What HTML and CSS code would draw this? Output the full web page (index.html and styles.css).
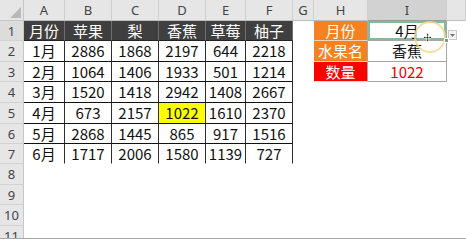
FILE: index.html
```html
<!DOCTYPE html>
<html lang="zh-CN">
<head>
<meta charset="utf-8">
<title>Sheet</title>
<link rel="stylesheet" href="styles.css">
</head>
<body>
<div class="wrap">
<table class="sheet">
<colgroup>
<col class="w24"><col class="w41"><col class="w47"><col class="w47"><col class="w47"><col class="w40"><col class="w47"><col class="w21"><col class="w54"><col class="w79"><col class="w19">
</colgroup>
<tr class="h21">
  <th class="corner"><svg class="tri" width="13" height="12" viewBox="0 0 13 12"><polygon points="12,0 12,11 1,11" fill="#b8b8b8"/></svg></th>
  <th class="ch">A</th><th class="ch">B</th><th class="ch">C</th><th class="ch">D</th><th class="ch">E</th><th class="ch">F</th><th class="ch">G</th><th class="ch">H</th><th class="ch sel">I</th><th class="ch"></th>
</tr>
<tr class="h20">
  <th class="rn rsel">1</th>
  <td class="dh">月份</td><td class="dh">苹果</td><td class="dh">梨</td><td class="dh">香蕉</td><td class="dh">草莓</td><td class="dh">柚子</td>
  <td></td><td class="lab org">月份</td>
  <td class="val cur">4月
    <svg class="ring" width="34" height="34" viewBox="0 0 34 34"><circle cx="17" cy="17" r="15" fill="none" stroke="#f2d98c" stroke-width="2" opacity="0.85"/></svg>
    <svg class="mv" width="9" height="9" viewBox="0 0 9 9"><path d="M4.5 0.5 L6 2.2 H5 V4 H6.8 V3 L8.5 4.5 L6.8 6 V5 H5 V6.8 H6 L4.5 8.5 L3 6.8 H4 V5 H2.2 V6 L0.5 4.5 L2.2 3 V4 H4 V2.2 H3 Z" fill="#111" stroke="#fff" stroke-width="0.6"/></svg>
    <span class="handle"></span>
  </td>
  <td class="ddcell"><span class="dd"><svg width="5" height="3" viewBox="0 0 5 3"><polygon points="0,0 5,0 2.5,3" fill="#777"/></svg></span></td>
</tr>
<tr class="h21">
  <th class="rn">2</th>
  <td class="d">1月</td><td class="d">2886</td><td class="d">1868</td><td class="d">2197</td><td class="d">644</td><td class="d">2218</td>
  <td></td><td class="lab org">水果名</td><td class="val">香蕉</td><td></td>
</tr>
<tr class="h20">
  <th class="rn">3</th>
  <td class="d">2月</td><td class="d">1064</td><td class="d">1406</td><td class="d">1933</td><td class="d">501</td><td class="d">1214</td>
  <td></td><td class="lab red">数量</td><td class="val redtxt">1022</td><td></td>
</tr>
<tr class="h21">
  <th class="rn">4</th>
  <td class="d">3月</td><td class="d">1520</td><td class="d">1418</td><td class="d">2942</td><td class="d">1408</td><td class="d">2667</td>
  <td></td><td></td><td></td><td></td>
</tr>
<tr class="h21">
  <th class="rn">5</th>
  <td class="d">4月</td><td class="d">673</td><td class="d">2157</td><td class="d hi">1022</td><td class="d">1610</td><td class="d">2370</td>
  <td></td><td></td><td></td><td></td>
</tr>
<tr class="h20">
  <th class="rn">6</th>
  <td class="d">5月</td><td class="d">2868</td><td class="d">1445</td><td class="d">865</td><td class="d">917</td><td class="d">1516</td>
  <td></td><td></td><td></td><td></td>
</tr>
<tr class="h20">
  <th class="rn">7</th>
  <td class="d last">6月</td><td class="d last">1717</td><td class="d last">2006</td><td class="d last">1580</td><td class="d last">1139</td><td class="d last">727</td>
  <td></td><td></td><td></td><td></td>
</tr>
<tr class="h21"><th class="rn">8</th><td></td><td></td><td></td><td></td><td></td><td></td><td></td><td></td><td></td><td></td></tr>
<tr class="h20"><th class="rn">9</th><td></td><td></td><td></td><td></td><td></td><td></td><td></td><td></td><td></td><td></td></tr>
<tr class="h21"><th class="rn">10</th><td></td><td></td><td></td><td></td><td></td><td></td><td></td><td></td><td></td><td></td></tr>
<tr class="h21"><th class="rn">11</th><td></td><td></td><td></td><td></td><td></td><td></td><td></td><td></td><td></td><td></td></tr>
</table>
</div>
</body>
</html>
```
FILE: styles.css
```css
body {
  margin: 0;
  background: #fff;
}
.wrap {
  width: 466px;
  height: 238px;
  overflow: hidden;
  border-bottom: 1px solid #a8a8a8;
}
.sheet {
  border-collapse: separate;
  border-spacing: 0;
  table-layout: fixed;
  width: 466px;
  font-family: "Noto Sans CJK SC", "Noto Sans", sans-serif;
  font-size: 15px;
  color: #111;
}
.w24 { width: 24px; }
.w41 { width: 41px; }
.w47 { width: 47px; }
.w40 { width: 40px; }
.w21 { width: 21px; }
.w54 { width: 54px; }
.w79 { width: 79px; }
.w19 { width: 19px; }
.h20 { height: 20px; }
.h21 { height: 21px; }
.sheet td,
.sheet th {
  padding: 0;
  box-sizing: border-box;
  border-right: 1px solid transparent;
  border-bottom: 1px solid transparent;
  text-align: center;
  vertical-align: middle;
  font-weight: normal;
  white-space: nowrap;
  line-height: 18px;
}
.corner {
  background: #e6e6e6;
  border-right-color: #c6c6c6 !important;
  border-bottom-color: #c6c6c6 !important;
  vertical-align: bottom !important;
  text-align: right !important;
}
.tri {
  display: block;
  margin: 0 1px 1px auto;
}
.ch {
  background: #e6e6e6;
  color: #444;
  font-family: "Noto Sans", sans-serif;
  font-size: 13px;
  border-right-color: #cfcfcf !important;
  border-bottom-color: #bdbdbd !important;
}
.ch.sel {
  background: #d2d2d2;
  border-bottom-color: #9a9a9a !important;
}
.rn {
  background: #e6e6e6;
  color: #444;
  font-family: "Noto Sans", sans-serif;
  font-size: 13px;
  border-right-color: #c6c6c6 !important;
  border-bottom-color: #d2d2d2 !important;
}
.rn.rsel {
  background: #dcdcdc;
}
.dh {
  background: #3f3f3f;
  color: #fff;
  border-right-color: #6e6e6e !important;
  border-bottom-color: #222 !important;
}
.d {
  border-right-color: #2e2e2e !important;
  border-bottom-color: #111 !important;
}
.d.last {
  border-bottom-color: transparent !important;
}
.d.hi {
  background: #ffff00;
}
.lab {
  color: #fff;
  border-right-color: #a6a6a6 !important;
  border-bottom-color: #f6d3b4 !important;
}
.lab.org {
  background: #f5821f;
}
.lab.red {
  background: #ff0000;
  border-bottom-color: #d9d9d9 !important;
}
.val {
  border-right-color: #a6a6a6 !important;
  border-bottom-color: #a6a6a6 !important;
}
.redtxt {
  color: #e60000;
}
.cur {
  position: relative;
  box-shadow: inset 0 0 0 2px #86b89a;
}
.ring {
  position: absolute;
  left: 45px;
  top: -1px;
}
.mv {
  position: absolute;
  left: 55px;
  top: 12px;
}
.handle {
  position: absolute;
  right: -3px;
  bottom: -3px;
  width: 5px;
  height: 5px;
  background: #6fa584;
  border: 1px solid #fff;
  box-sizing: border-box;
}
.ddcell {
  vertical-align: bottom !important;
  text-align: left !important;
}
.dd {
  display: flex;
  align-items: center;
  justify-content: center;
  width: 9px;
  height: 10px;
  margin-left: 1px;
  background: #f3f3f3;
  border: 1px solid #c8c8c8;
  box-sizing: border-box;
}
```
